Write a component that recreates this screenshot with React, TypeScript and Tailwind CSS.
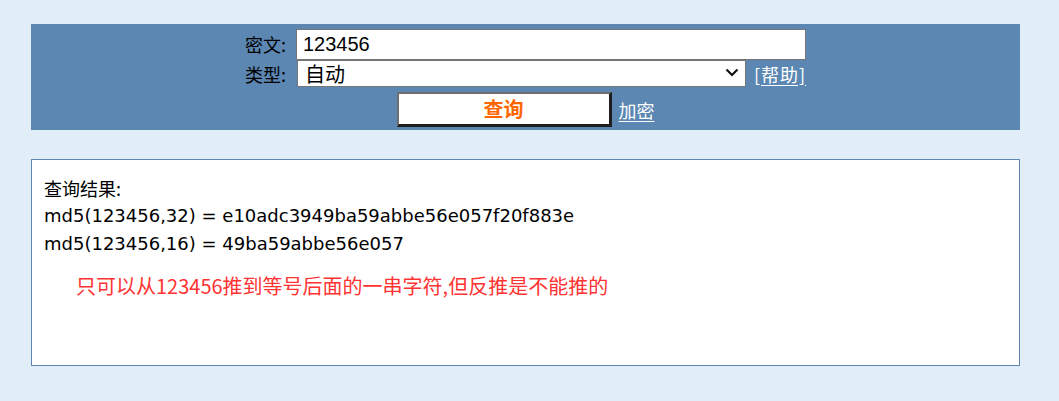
import React from "react";

export default function App() {
  const cjk = { fontFamily: '"Noto Sans CJK SC", "Noto Sans", sans-serif' };
  return (
    <div className="min-h-[401px] w-full bg-[#e2eef7] pt-[24px]" style={cjk}>
      <div className="ml-[31px] flex w-[989px] flex-col items-center bg-[#5b87b2] pb-[3px] pt-[4px] text-[18px] leading-none text-black">
        <div className="flex h-[32px] items-center">
          <span className="w-[51px] leading-none">密文:</span>
          <input
            defaultValue="123456"
            className="h-[31px] w-[510px] border border-[#767676] bg-white px-[6px] text-[20px] text-black outline-none"
            style={{ fontFamily: '"Liberation Sans", Arial, sans-serif' }}
          />
        </div>
        <div className="flex h-[27px] items-center">
          <span className="w-[52px] leading-none">类型:</span>
          <div className="relative h-[27px] w-[449px]">
            <select className="h-[27px] w-full appearance-none border border-[#767676] bg-white pl-[7px] text-[20px] leading-none text-black outline-none">
              <option>自动</option>
            </select>
            <svg
              className="pointer-events-none absolute right-[7px] top-[8px]"
              width="14"
              height="9"
              viewBox="0 0 14 9"
            >
              <path d="M1.5 1.5 L7 7 L12.5 1.5" fill="none" stroke="#111" strokeWidth="2.2" />
            </svg>
          </div>
          <a href="#" className="ml-[8px] tracking-[1px] text-white underline underline-offset-[3px]">
            [帮助]
          </a>
        </div>
        <div className="mt-[5px] flex h-[35px] items-center">
          <button
            className="flex h-[35px] w-[215px] items-center justify-center border-[2px] border-b-[3px] border-r-[3px] border-b-[#1e1e1e] border-l-[#6e6e6e] border-r-[#1e1e1e] border-t-[#6e6e6e] bg-white text-[20px] font-bold text-[#ff6600]"
          >
            查询
          </button>
          <a href="#" className="ml-[7px] text-white underline underline-offset-[3px]">
            加密
          </a>
        </div>
      </div>

      <div className="ml-[31px] mt-[29px] h-[207px] w-[989px] border border-[#5b87b2] bg-white pl-[12px] pt-[14px] text-[18px] leading-[28px] text-black">
        <div>查询结果:</div>
        <div style={{ fontFamily: '"DejaVu Sans", Verdana, sans-serif' }}>
          md5(123456,32) = e10adc3949ba59abbe56e057f20f883e
        </div>
        <div style={{ fontFamily: '"DejaVu Sans", Verdana, sans-serif' }}>
          md5(123456,16) = 49ba59abbe56e057
        </div>
        <div className="mt-[14px] pl-[32px] text-[20px] text-[#ff3333]">
          只可以从123456推到等号后面的一串字符,但反推是不能推的
        </div>
      </div>
    </div>
  );
}
